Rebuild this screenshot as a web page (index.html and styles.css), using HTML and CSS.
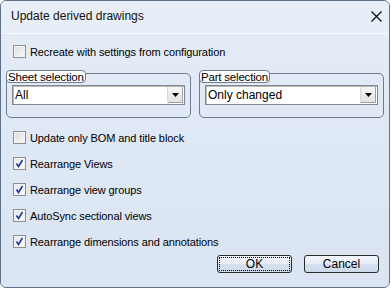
FILE: index.html
```html
<!DOCTYPE html>
<html lang="en">
<head>
  <meta charset="UTF-8" />
  <title>Update derived drawings</title>
  <link rel="stylesheet" href="styles.css">
</head>
<body>
  <div class="window">
    <div class="titlebar">
      <span class="title">Update derived drawings</span>
      <svg class="close" width="11" height="11" viewBox="0 0 11 11">
        <path d="M0.5 0.5 L10.5 10.5 M10.5 0.5 L0.5 10.5" stroke="#111" stroke-width="1.3" fill="none"/>
      </svg>
    </div>
    <div class="content">
      <label class="check first"><span class="box"></span>Recreate with settings from configuration</label>

      <div class="groups">
        <div class="group">
          <span class="legend">Sheet selection</span>
          <div class="select">
            <span class="value">All</span>
            <span class="arrow"><svg width="7" height="4" viewBox="0 0 7 4"><path d="M0 0 H7 L3.5 4 Z" fill="#000"/></svg></span>
          </div>
        </div>
        <div class="group">
          <span class="legend">Part selection</span>
          <div class="select">
            <span class="value">Only changed</span>
            <span class="arrow"><svg width="7" height="4" viewBox="0 0 7 4"><path d="M0 0 H7 L3.5 4 Z" fill="#000"/></svg></span>
          </div>
        </div>
      </div>

      <div class="options">
        <label class="check"><span class="box"></span>Update only BOM and title block</label>
        <label class="check"><span class="box checked"><svg width="9" height="9" viewBox="0 0 9 9"><path d="M1.5 4.5 L3.5 7.5 L7.5 1" stroke="#1c3a9c" stroke-width="1.6" fill="none"/></svg></span>Rearrange Views</label>
        <label class="check"><span class="box checked"><svg width="9" height="9" viewBox="0 0 9 9"><path d="M1.5 4.5 L3.5 7.5 L7.5 1" stroke="#1c3a9c" stroke-width="1.6" fill="none"/></svg></span>Rearrange view groups</label>
        <label class="check"><span class="box checked"><svg width="9" height="9" viewBox="0 0 9 9"><path d="M1.5 4.5 L3.5 7.5 L7.5 1" stroke="#1c3a9c" stroke-width="1.6" fill="none"/></svg></span>AutoSync sectional views</label>
        <label class="check"><span class="box checked"><svg width="9" height="9" viewBox="0 0 9 9"><path d="M1.5 4.5 L3.5 7.5 L7.5 1" stroke="#1c3a9c" stroke-width="1.6" fill="none"/></svg></span>Rearrange dimensions and annotations</label>
      </div>

      <div class="buttons">
        <button class="btn default"><span>OK</span></button>
        <button class="btn"><span>Cancel</span></button>
      </div>
    </div>
  </div>
</body>
</html>
```

FILE: styles.css
```css
* {
  margin: 0;
  padding: 0;
  box-sizing: border-box;
}
body {
  background: #ffffff;
  font-family: 'Liberation Sans', Arial, sans-serif;
  font-size: 11px;
  color: #000;
}
/* Window frame */
.window {
  width: 390px;
  height: 288px;
  border: 1px solid #5f7188;
  border-radius: 6px;
  background: #dbe5f3;
  display: flex;
  flex-direction: column;
  overflow: hidden;
}
.titlebar {
  height: 33px;
  display: flex;
  align-items: center;
  justify-content: space-between;
  padding: 0 7px 2px 10px;
  background: #e8eef8;
  border-bottom: 1px solid #f4f7fc;
}
.title {
  font-size: 12px;
  color: #111;
}
.content {
  flex: 1;
  padding: 0 5px;
  display: flex;
  flex-direction: column;
  background: linear-gradient(180deg, #e3ebf7, #dae4f2);
}
/* Checkboxes */
.check {
  display: flex;
  align-items: center;
  height: 13px;
  gap: 4px;
  padding-left: 7px;
  white-space: nowrap;
  letter-spacing: -0.1px;
}
.check.first {
  margin-top: 11px;
}
.box {
  width: 13px;
  height: 13px;
  border: 1px solid #8f8f8f;
  background: linear-gradient(135deg, #dcdcdc, #f8f8f8);
  box-shadow: inset 0 0 0 1px #f4f4f4;
  display: flex;
  align-items: center;
  justify-content: center;
  flex-shrink: 0;
}
.box.checked {
  background: linear-gradient(135deg, #e6e6e6, #ffffff);
}
/* Group boxes */
.groups {
  display: flex;
  gap: 8px;
  margin-top: 15px;
}
.group {
  flex: 1;
  height: 45px;
  border: 1px solid #6e7c8c;
  border-radius: 5px;
  padding: 0 5px;
}
.legend {
  display: block;
  width: fit-content;
  margin: -4px 0 0 -6px;
  padding: 0 1px;
  height: 13px;
  line-height: 12px;
  font-size: 11.5px;
  letter-spacing: -0.2px;
  background: #ffffff;
  border: 1px solid #6e7c8c;
  border-radius: 4px;
}
.select {
  margin-top: 2px;
  height: 20px;
  display: flex;
  align-items: stretch;
  background: #ffffff;
  border: 1px solid #828790;
  box-shadow: inset 1px 1px 0 #b8b8b8;
  font-size: 12px;
}
.value {
  flex: 1;
  padding-left: 2px;
  display: flex;
  align-items: center;
}
.arrow {
  width: 16px;
  margin: 1px;
  background: linear-gradient(180deg, #f5f5f5, #e2e2e2);
  border-left: 1px solid #d8d8d8;
  box-shadow: inset -1px -1px 0 #a0a0a0;
  display: flex;
  align-items: center;
  justify-content: center;
}
/* Options */
.options {
  display: flex;
  flex-direction: column;
  gap: 13px;
  margin-top: 13px;
}
/* Buttons */
.buttons {
  display: flex;
  justify-content: flex-end;
  gap: 12px;
  margin-top: 7px;
  padding-right: 5px;
}
.btn {
  width: 75px;
  height: 18px;
  border: 1px solid #2b2b2b;
  border-radius: 3px;
  background: linear-gradient(180deg, #f4f7fc 0%, #e7eef8 50%, #d7e2f0 51%, #cdd9ea 100%);
  font-family: 'Liberation Sans', Arial, sans-serif;
  font-size: 12px;
  color: #000;
  padding: 1px;
  display: flex;
}
.btn span {
  flex: 1;
  display: flex;
  align-items: center;
  justify-content: center;
  border: 1px dotted transparent;
}
.btn.default span {
  border-color: #000;
}
```
